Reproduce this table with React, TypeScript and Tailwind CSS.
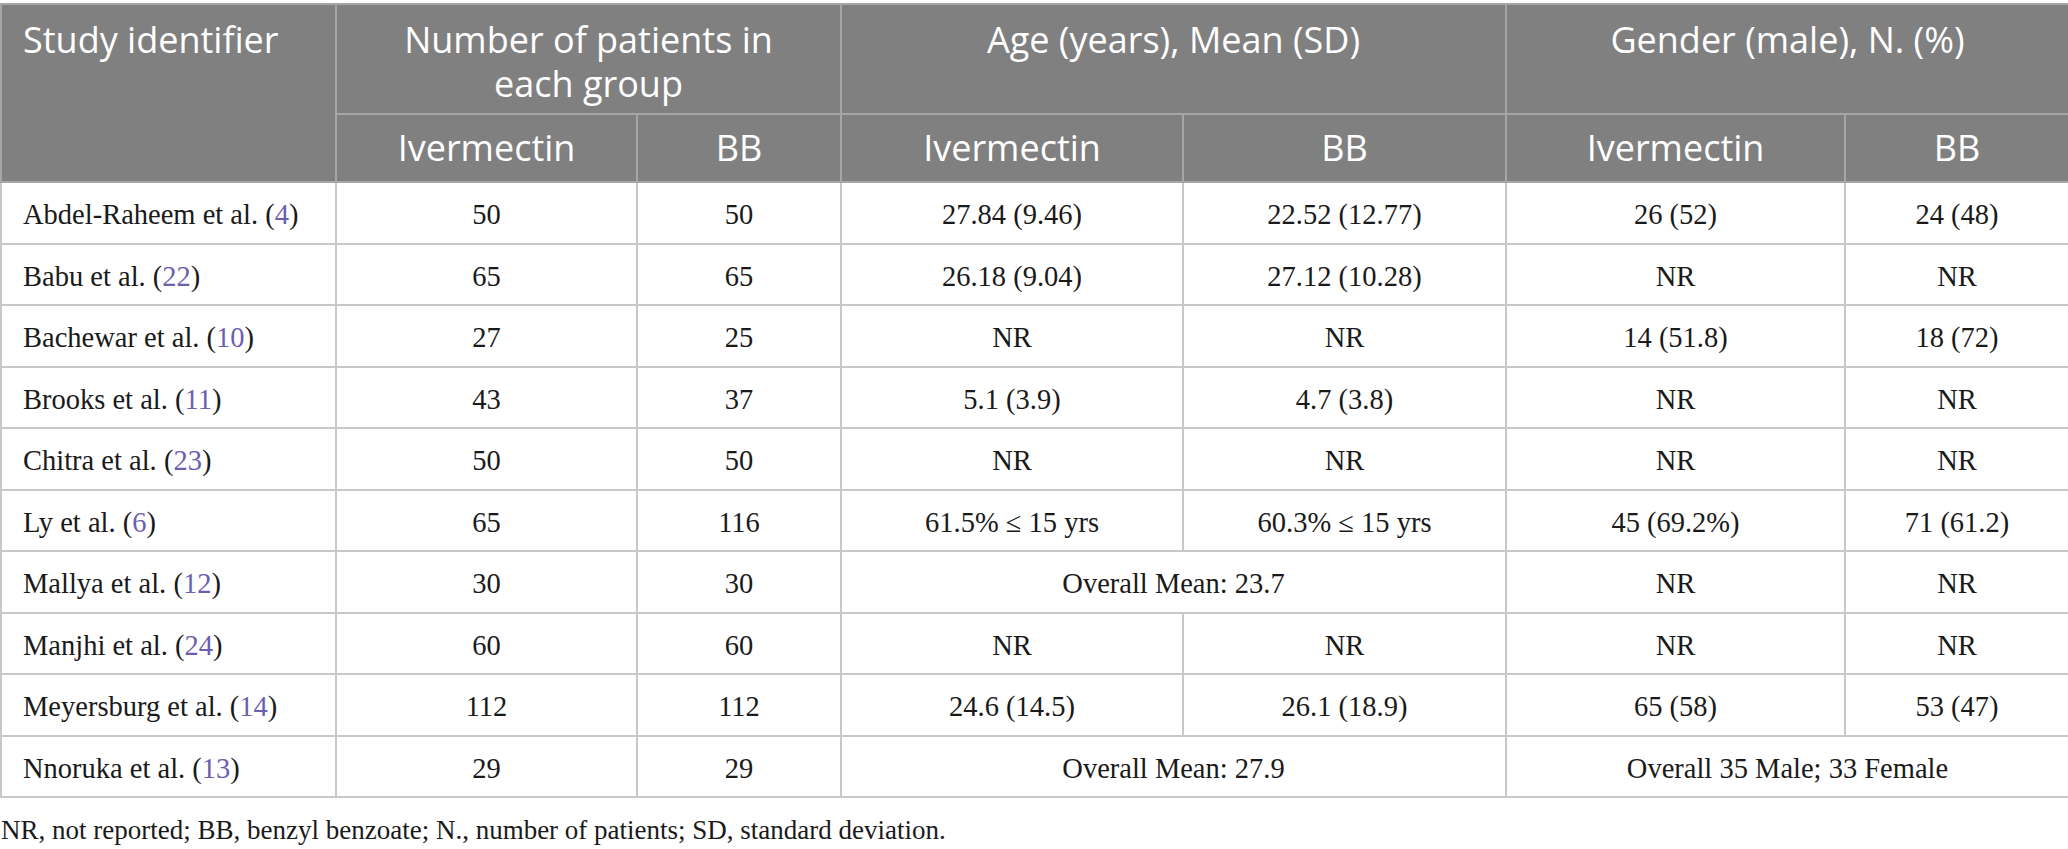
import React from "react";

type Cell = { text: string; span?: number };
type Row = { study: string; ref: string; cells: Cell[] };

// Baseline characteristics of the included studies
const rows: Row[] = [
  { study: "Abdel-Raheem et al.", ref: "4", cells: [{ text: "50" }, { text: "50" }, { text: "27.84 (9.46)" }, { text: "22.52 (12.77)" }, { text: "26 (52)" }, { text: "24 (48)" }] },
  { study: "Babu et al.", ref: "22", cells: [{ text: "65" }, { text: "65" }, { text: "26.18 (9.04)" }, { text: "27.12 (10.28)" }, { text: "NR" }, { text: "NR" }] },
  { study: "Bachewar et al.", ref: "10", cells: [{ text: "27" }, { text: "25" }, { text: "NR" }, { text: "NR" }, { text: "14 (51.8)" }, { text: "18 (72)" }] },
  { study: "Brooks et al.", ref: "11", cells: [{ text: "43" }, { text: "37" }, { text: "5.1 (3.9)" }, { text: "4.7 (3.8)" }, { text: "NR" }, { text: "NR" }] },
  { study: "Chitra et al.", ref: "23", cells: [{ text: "50" }, { text: "50" }, { text: "NR" }, { text: "NR" }, { text: "NR" }, { text: "NR" }] },
  { study: "Ly et al.", ref: "6", cells: [{ text: "65" }, { text: "116" }, { text: "61.5% ≤ 15 yrs" }, { text: "60.3% ≤ 15 yrs" }, { text: "45 (69.2%)" }, { text: "71 (61.2)" }] },
  { study: "Mallya et al.", ref: "12", cells: [{ text: "30" }, { text: "30" }, { text: "Overall Mean: 23.7", span: 2 }, { text: "NR" }, { text: "NR" }] },
  { study: "Manjhi et al.", ref: "24", cells: [{ text: "60" }, { text: "60" }, { text: "NR" }, { text: "NR" }, { text: "NR" }, { text: "NR" }] },
  { study: "Meyersburg et al.", ref: "14", cells: [{ text: "112" }, { text: "112" }, { text: "24.6 (14.5)" }, { text: "26.1 (18.9)" }, { text: "65 (58)" }, { text: "53 (47)" }] },
  { study: "Nnoruka et al.", ref: "13", cells: [{ text: "29" }, { text: "29" }, { text: "Overall Mean: 27.9", span: 2 }, { text: "Overall 35 Male; 33 Female", span: 2 }] },
];

const head = "border-2 border-[#a6a6a6] font-normal text-white text-[36px] leading-[44px]";
const body = "border-2 border-[#c8c8c8] h-[61.5px] pt-[5px] align-middle text-center";

export default function App() {
  return (
    <div className="min-h-screen bg-white pt-[3px] text-[#1a1a1a]" style={{ fontFamily: '"Liberation Serif", "Times New Roman", serif' }}>
      <table className="w-[2068px] table-fixed border-collapse text-[28.5px] leading-[36px]">
        <colgroup>
          <col className="w-[335px]" />
          <col className="w-[301px]" />
          <col className="w-[204px]" />
          <col className="w-[342px]" />
          <col className="w-[323px]" />
          <col className="w-[339px]" />
          <col className="w-[224px]" />
        </colgroup>
        <thead className="bg-[#808080] font-['Open_Sans',sans-serif]">
          <tr className="h-[110px]">
            <th rowSpan={2} className={`${head} px-[21px] pt-[13px] text-left align-top`}>Study identifier</th>
            <th colSpan={2} className={`${head} px-[20px] pt-[13px] align-top`}>
              Number of patients in
              <br />
              each group
            </th>
            <th colSpan={2} className={`${head} px-[20px] pt-[13px] align-top`}>Age (years), Mean (SD)</th>
            <th colSpan={2} className={`${head} px-[20px] pt-[13px] align-top`}>Gender (male), N. (%)</th>
          </tr>
          <tr className="h-[68px]">
            <th className={`${head} align-middle`}>Ivermectin</th>
            <th className={`${head} align-middle`}>BB</th>
            <th className={`${head} align-middle`}>Ivermectin</th>
            <th className={`${head} align-middle`}>BB</th>
            <th className={`${head} align-middle`}>Ivermectin</th>
            <th className={`${head} align-middle`}>BB</th>
          </tr>
        </thead>
        <tbody>
          {rows.map((r) => (
            <tr key={r.study}>
              <td className={`${body} px-[21px] text-left`}>
                {r.study} (<span className="text-[#6b5fb0]">{r.ref}</span>)
              </td>
              {r.cells.map((c, i) => (
                <td key={i} colSpan={c.span} className={body}>
                  {c.text}
                </td>
              ))}
            </tr>
          ))}
        </tbody>
      </table>

      {/* Footnote */}
      <p className="mt-[14px] pl-[1px] text-[27px] leading-[36px]">
        NR, not reported; BB, benzyl benzoate; N., number of patients; SD, standard deviation.
      </p>
    </div>
  );
}
